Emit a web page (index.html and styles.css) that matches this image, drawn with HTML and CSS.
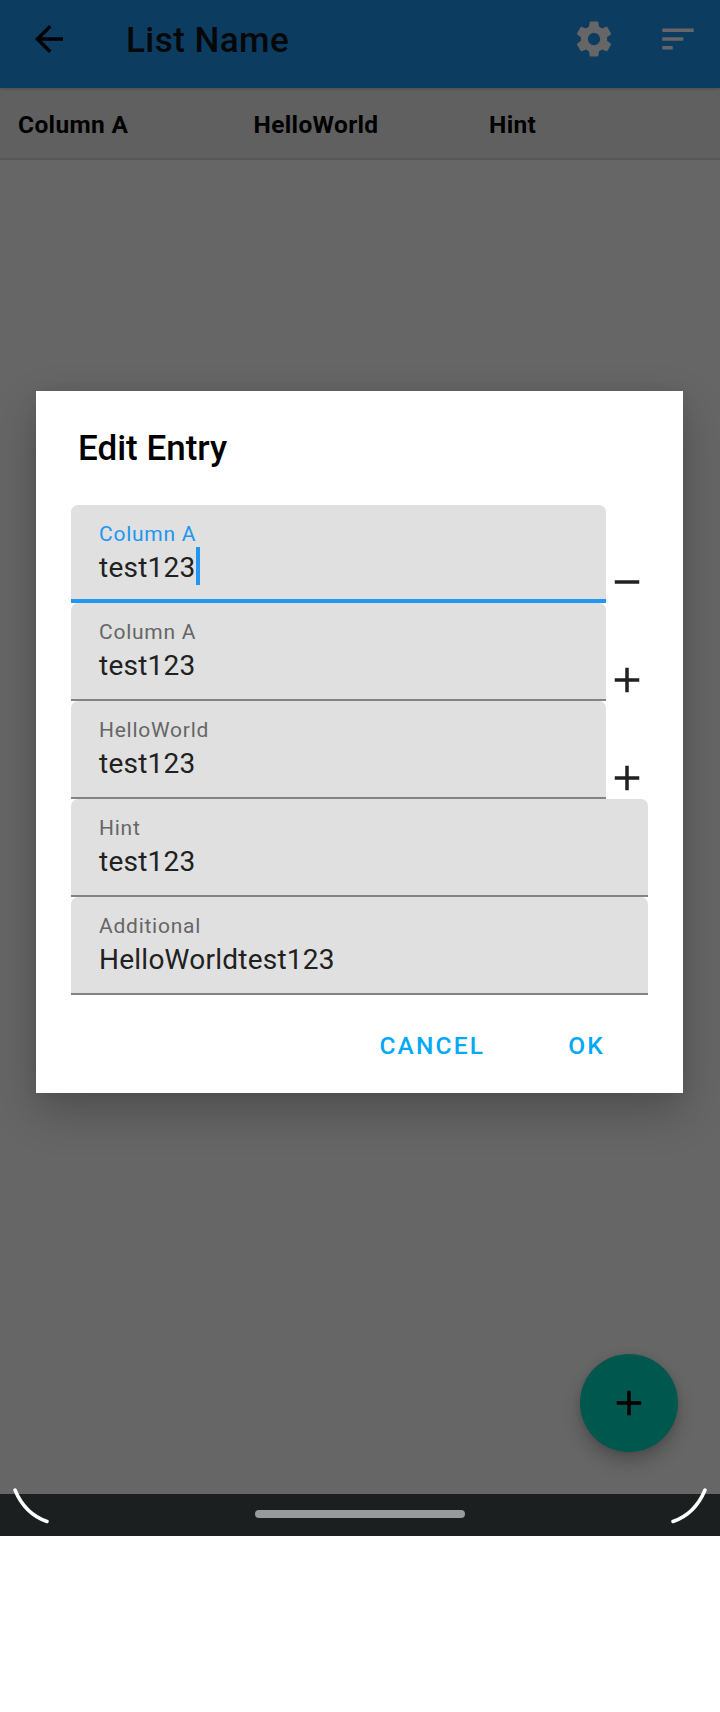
FILE: index.html
```html
<!DOCTYPE html>
<html lang="en">
<head>
<meta charset="utf-8">
<title>List Name</title>
<link rel="stylesheet" href="styles.css">
</head>
<body>
<div class="screen">
  <header class="toolbar">
    <svg class="icon" viewBox="0 0 24 24"><path d="M20 11H7.83l5.59-5.59L12 4l-8 8 8 8 1.41-1.41L7.83 13H20v-2z"/></svg>
    <h1 class="toolbar-title">List Name</h1>
    <svg class="icon icon-action" viewBox="0 0 24 24"><path d="M19.43 12.98c.04-.32.07-.64.07-.98s-.03-.66-.07-.98l2.11-1.65c.19-.15.24-.42.12-.64l-2-3.46c-.12-.22-.39-.3-.61-.22l-2.49 1c-.52-.4-1.08-.73-1.69-.98l-.38-2.65C14.46 2.18 14.25 2 14 2h-4c-.25 0-.46.18-.49.42l-.38 2.65c-.61.25-1.17.59-1.69.98l-2.49-1c-.23-.09-.49 0-.61.22l-2 3.46c-.13.22-.07.49.12.64l2.11 1.65c-.04.32-.07.65-.07.98s.03.66.07.98l-2.11 1.65c-.19.15-.24.42-.12.64l2 3.46c.12.22.39.3.61.22l2.49-1c.52.4 1.08.73 1.69.98l.38 2.65c.03.24.24.42.49.42h4c.25 0 .46-.18.49-.42l.38-2.65c.61-.25 1.17-.59 1.69-.98l2.49 1c.23.09.49 0 .61-.22l2-3.46c.12-.22.07-.49-.12-.64l-2.11-1.65zM12 15.5c-1.93 0-3.5-1.57-3.5-3.5s1.57-3.5 3.5-3.5 3.5 1.57 3.5 3.5-1.57 3.5-3.5 3.5z"/></svg>
    <svg class="icon icon-action" viewBox="0 0 24 24"><path d="M3 18h6v-2H3v2zM3 6v2h18V6H3zm0 7h12v-2H3v2z"/></svg>
  </header>
  <div class="columns">
    <span class="column">Column A</span>
    <span class="column">HelloWorld</span>
    <span class="column">Hint</span>
  </div>
  <main class="content">
    <button class="fab" aria-label="Add"><svg class="icon" viewBox="0 0 24 24"><path d="M19 13h-6v6h-2v-6H5v-2h6V5h2v6h6v2z"/></svg></button>
  </main>
  <footer class="navbar">
    <svg class="corner" viewBox="0 0 36 36"><path d="M2 2Q12 26 34 33.500"/></svg>
    <span class="pill"></span>
    <svg class="corner" viewBox="0 0 36 36"><path d="M34 2Q24 26 2 33.500"/></svg>
  </footer>

  <section class="dialog" role="dialog">
    <h2 class="dialog-title">Edit Entry</h2>
    <div class="row">
      <div class="field field-active"><span class="label">Column A</span><span class="value">test123<i class="caret"></i></span></div>
      <svg class="icon row-icon" viewBox="0 0 24 24"><path d="M19 13H5v-2h14v2z"/></svg>
    </div>
    <div class="row">
      <div class="field"><span class="label">Column A</span><span class="value">test123</span></div>
      <svg class="icon row-icon" viewBox="0 0 24 24"><path d="M19 13h-6v6h-2v-6H5v-2h6V5h2v6h6v2z"/></svg>
    </div>
    <div class="row">
      <div class="field"><span class="label">HelloWorld</span><span class="value">test123</span></div>
      <svg class="icon row-icon" viewBox="0 0 24 24"><path d="M19 13h-6v6h-2v-6H5v-2h6V5h2v6h6v2z"/></svg>
    </div>
    <div class="row">
      <div class="field"><span class="label">Hint</span><span class="value">test123</span></div>
    </div>
    <div class="row">
      <div class="field"><span class="label">Additional</span><span class="value">HelloWorldtest123</span></div>
    </div>
    <div class="actions">
      <button class="action">CANCEL</button>
      <button class="action">OK</button>
    </div>
  </section>
</div>
</body>
</html>
```
FILE: styles.css
```css
* { box-sizing: border-box; }

body {
  margin: 0;
  background: #fff;
  font-family: Roboto, "Liberation Sans", sans-serif;
}

button {
  padding: 0;
  border: 0;
  background: none;
  font: inherit;
}

.screen {
  position: relative;
  display: flex;
  flex-direction: column;
  width: 720px;
  height: 1536px;
  background: #666;
  overflow: hidden;
}

.icon {
  display: block;
  flex: none;
  width: 42px;
  height: 42px;
}

.toolbar {
  display: flex;
  align-items: center;
  gap: 42px;
  height: 88px;
  padding: 0 21px 10px 28px;
  background: #0d3c61;
  box-shadow: 0 1px 3px rgba(0, 0, 0, .2);
  z-index: 1;
}

.toolbar-title {
  flex: 1;
  margin: 0;
  padding: 4px 0 0 14px;
  font-size: 35px;
  font-weight: 500;
  line-height: 42px;
  letter-spacing: .45px;
  color: #050709;
}

.icon-action { fill: #666; }

.columns {
  display: grid;
  grid-template-columns: repeat(3, 235.500px);
  height: 72px;
  padding-left: 18px;
  background: #606060;
  border-bottom: 2px solid #575757;
}

.column {
  font-size: 24.500px;
  font-weight: 700;
  line-height: 74px;
  letter-spacing: .35px;
  color: #000;
}

.content {
  display: flex;
  flex: 1;
  align-items: flex-end;
  justify-content: flex-end;
  padding: 0 42px 42px 0;
}

.fab {
  display: grid;
  place-items: center;
  width: 98px;
  height: 98px;
  border-radius: 50%;
  background: #00574e;
  box-shadow: 0 10px 18px rgba(0, 0, 0, .22), 0 1px 6px rgba(0, 0, 0, .1);
}

.navbar {
  display: flex;
  align-items: flex-end;
  justify-content: space-between;
  height: 42px;
  padding: 0 13px 12px;
  background: #1c1f20;
}

.corner {
  width: 36px;
  height: 36px;
  fill: none;
  stroke: #fff;
  stroke-width: 3.500;
  stroke-linecap: round;
}

.pill {
  width: 210px;
  height: 8px;
  margin-bottom: 6px;
  border-radius: 4px;
  background: #999b9a;
}

.dialog {
  position: absolute;
  top: 391px;
  left: 36px;
  z-index: 2;
  width: 647px;
  height: 702px;
  padding: 36px 35px 0;
  background: #fff;
  box-shadow: 0 18px 42px rgba(0, 0, 0, .24), 0 0 12px rgba(0, 0, 0, .06);
}

.dialog-title {
  margin: 0;
  padding-left: 7px;
  height: 78px;
  font-size: 35px;
  font-weight: 500;
  line-height: 44px;
  color: #000;
}

.row {
  display: flex;
  align-items: flex-end;
  height: 98px;
}

.field {
  display: flex;
  flex: 1;
  flex-direction: column;
  height: 98px;
  padding: 16px 28px 0;
  border-bottom: 2px solid #838383;
  border-radius: 7px 7px 0 0;
  background: #e0e0e0;
}

.label {
  font-size: 21px;
  line-height: 26px;
  letter-spacing: .75px;
  color: #666;
}

.value {
  display: flex;
  align-items: flex-start;
  height: 38px;
  font-size: 28px;
  line-height: 42px;
  letter-spacing: .24px;
  color: #212121;
}

.field-active { border-bottom: 4px solid #2196f3; }
.field-active .label { color: #2196f3; }

.caret {
  width: 4px;
  height: 38px;
  background: #2196f3;
}

.row-icon {
  fill: #212121;
}

.actions {
  display: flex;
  justify-content: flex-end;
  gap: 83px;
  padding: 32px 43px 0 0;
}

.action {
  font-size: 24.500px;
  font-weight: 500;
  line-height: 38px;
  letter-spacing: 2.190px;
  color: #03a9f4;
}
```
